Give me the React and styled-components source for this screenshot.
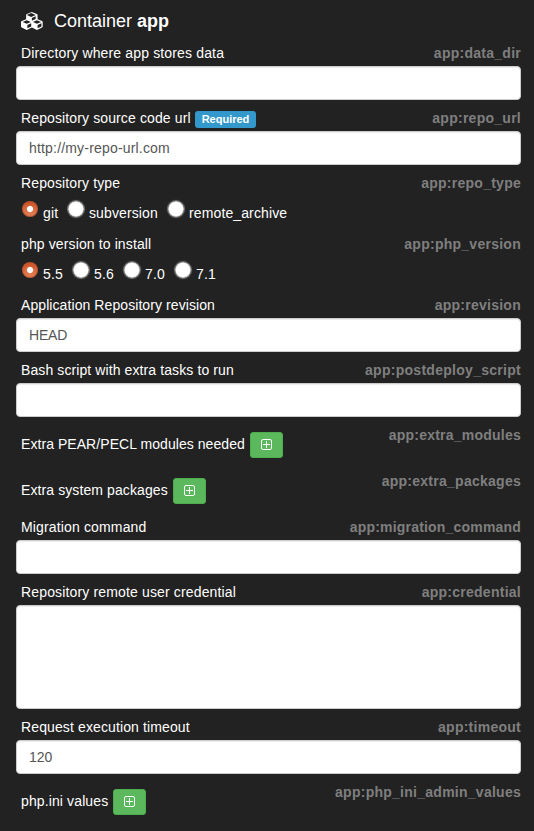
import React from "react";
import styled, { createGlobalStyle } from "styled-components";

const Global = createGlobalStyle`
  * { box-sizing: border-box; }
  body { margin: 0; background: #222; }
`;

const Panel = styled.main`
  height: 831px;
  padding: 10px 13px 0 16px;
  overflow: hidden;
  background: #222;
  color: #fff;
  font: 14px/20px "Liberation Sans", Arial, sans-serif;
`;

const Heading = styled.h1`
  display: flex;
  align-items: center;
  gap: 10px;
  height: 22px;
  margin: 0 0 11px;
  padding-left: 5px;
  font-size: 18px;
  font-weight: 400;
  line-height: 22px;
`;

const Field = styled.div`
  height: ${(p) => p.$height || 65}px;
`;

const FieldHead = styled.div`
  display: flex;
  justify-content: space-between;
  align-items: flex-start;
  height: 23px;
  padding-left: 5px;
`;

const Label = styled.label`
  display: flex;
  align-items: center;
  white-space: nowrap;
  letter-spacing: ${(p) => p.$spacing ?? 0.12}px;
`;

const Key = styled.span`
  color: #7f7f7f;
  font-weight: 700;
  letter-spacing: ${(p) => p.$spacing ?? 0.26}px;
`;

const Badge = styled.span`
  margin: 3px 0 0 4px;
  padding: 0 7px;
  height: 17px;
  border-radius: 3px;
  background: #3399cc;
  font-size: 11px;
  font-weight: 700;
  line-height: 17px;
  letter-spacing: 0;
`;

const Input = styled.input`
  display: block;
  width: 100%;
  height: 34px;
  padding: 0 12px;
  border: 1px solid #ccc;
  border-radius: 4px;
  outline: 0;
  background: #fff;
  box-shadow: inset 0 1px 1px rgba(0, 0, 0, 0.075);
  color: #555;
  font: inherit;
  letter-spacing: ${(p) => p.$spacing ?? 0}px;
`;

const TextArea = styled(Input).attrs({ as: "textarea" })`
  height: 104px;
  resize: none;
`;

const Options = styled.div`
  display: flex;
  height: 30px;
  padding: 5px 0 0 6px;
`;

const Option = styled.label`
  display: flex;
  align-items: flex-start;
  width: ${(p) => p.$width}px;
  white-space: nowrap;
  letter-spacing: 0.12px;
  span { margin: 2px 0 0 5px; }
`;

const Radio = styled.input.attrs({ type: "radio" })`
  appearance: none;
  flex: none;
  width: 16px;
  height: 16px;
  margin: 0;
  border-radius: 50%;
  background: radial-gradient(circle, #fff 0 6.5px, #ddd 7.3px, #aaa 8px);
  box-shadow: 0 0 1px 1px #777;
  &:checked {
    background:
      radial-gradient(circle, #fff 0 2.6px, transparent 3.6px),
      linear-gradient(#cc4f20, #e5865c);
    box-shadow: inset 0 0 1px 1px #b7532f;
  }
`;

const AddButton = styled.button`
  display: flex;
  align-items: center;
  justify-content: center;
  width: 33px;
  height: 26px;
  margin-left: 5px;
  padding: 0 0 1px;
  border: 1px solid #4cae4c;
  border-radius: 3px;
  background: #5cb85c;
  color: #fff;
`;

const AddRow = styled(FieldHead)`
  height: 46px;
  ${Label} { margin-top: 7px; height: 26px; }
  ${Label} > span { margin-top: -3px; }
`;

const CubesIcon = () => (
  <svg width="23" height="18" viewBox="0 0 2304 1792" fill="currentColor">
    <path d="M640 1632l384-192v-314l-384 164v342zM576 1178l404-173-404-173-404 173zM1664 1632l384-192v-314l-384 164v342zM1600 1178l404-173-404-173-404 173zM1088 863l384-165v-266l-384 164v267zM1024 484l441-189-441-189-441 189zM2176 1024v416q0 36-19 67t-52 47l-448 224q-25 14-57 14t-57-14l-448-224q-4-2-7-4-2 2-7 4l-448 224q-25 14-57 14t-57-14l-448-224q-33-16-52-47t-19-67v-416q0-38 21.500-70t56.500-48l434-186v-400q0-38 21.500-70t56.500-48l448-192q23-10 50-10t50 10l448 192q35 16 56.500 48t21.500 70v400l434 186q36 16 57 48t21 70z" />
  </svg>
);

const PlusIcon = () => (
  <svg width="11" height="11" viewBox="0 0 11 11" fill="none" stroke="currentColor">
    <rect x=".5" y=".5" width="10" height="10" rx="1.5" />
    <path d="M5.500 2v7M2 5.500h7" />
  </svg>
);

function TextField({ label, name, value = "", required, spacing, keySpacing, valueSpacing }) {
  return (
    <Field>
      <FieldHead>
        <Label $spacing={spacing}>{label}{required && <Badge>Required</Badge>}</Label>
        <Key $spacing={keySpacing}>{name}</Key>
      </FieldHead>
      <Input defaultValue={value} $spacing={valueSpacing} />
    </Field>
  );
}

function RadioField({ label, name, options }) {
  return (
    <Field $height={61}>
      <FieldHead><Label>{label}</Label><Key>{name}</Key></FieldHead>
      <Options>
        {options.map(([text, width], i) => (
          <Option key={text} $width={width}>
            <Radio name={name} defaultChecked={i === 0} />
            <span>{text}</span>
          </Option>
        ))}
      </Options>
    </Field>
  );
}

function ListField({ label, name, spacing, keySpacing }) {
  return (
    <AddRow>
      <Label $spacing={spacing}><span>{label}</span><AddButton aria-label="Add"><PlusIcon /></AddButton></Label>
      <Key $spacing={keySpacing}>{name}</Key>
    </AddRow>
  );
}

export default function App() {
  return (
    <>
      <Global />
      <Panel>
        <Heading><CubesIcon /><span>Container <b>app</b></span></Heading>
        <TextField label="Directory where app stores data" name="app:data_dir" spacing={0.15} />
        <TextField label="Repository source code url" name="app:repo_url" value="http://my-repo-url.com" valueSpacing={0.18} required />
        <RadioField label="Repository type" name="app:repo_type" options={[["git", 46], ["subversion", 100], ["remote_archive", 130]]} />
        <RadioField label="php version to install" name="app:php_version" options={[["5.5", 51], ["5.6", 51], ["7.0", 51], ["7.1", 51]]} />
        <TextField label="Application Repository revision" name="app:revision" value="HEAD" spacing={0.08} valueSpacing={-0.2} />
        <TextField label="Bash script with extra tasks to run" name="app:postdeploy_script" spacing={0.1} keySpacing={0.28} />
        <ListField label="Extra PEAR/PECL modules needed" name="app:extra_modules" spacing={0.06} keySpacing={0.23} />
        <ListField label="Extra system packages" name="app:extra_packages" spacing={0.1} />
        <TextField label="Migration command" name="app:migration_command" spacing={0.15} keySpacing={0.19} />
        <Field $height={135}>
          <FieldHead><Label $spacing={0.15}>Repository remote user credential</Label><Key>app:credential</Key></FieldHead>
          <TextArea />
        </Field>
        <TextField label="Request execution timeout" name="app:timeout" value="120" />
        <ListField label="php.ini values" name="app:php_ini_admin_values" />
      </Panel>
    </>
  );
}
